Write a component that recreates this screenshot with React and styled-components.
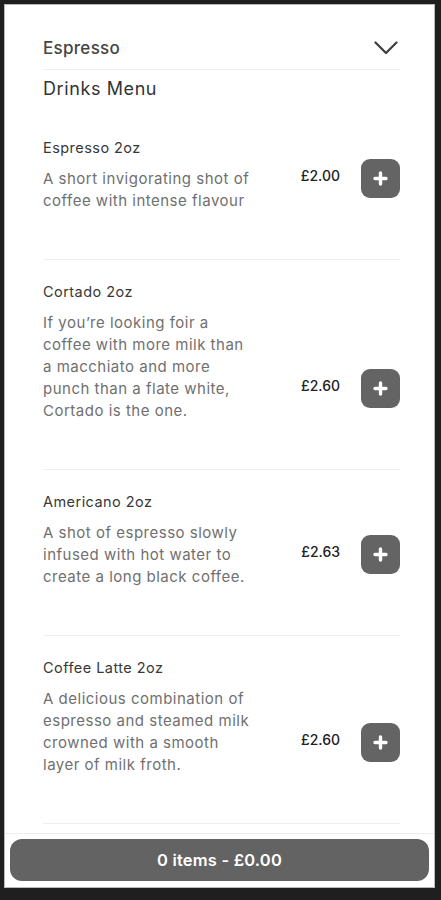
import styled, { createGlobalStyle } from "styled-components";

const Global = createGlobalStyle`
  html, body { margin: 0; padding: 0; background: #1f1f1f; }
  body { font-family: "Inter", "Open Sans", sans-serif; }
`;

const drinks = [
  {
    name: "Espresso 2oz",
    lines: ["A short invigorating shot of", "coffee with intense flavour"],
    price: "£2.00",
  },
  {
    name: "Cortado 2oz",
    lines: [
      "If you\u2019re looking foir a",
      "coffee with more milk than",
      "a macchiato and more",
      "punch than a flate white,",
      "Cortado is the one.",
    ],
    price: "£2.60",
  },
  {
    name: "Americano 2oz",
    lines: [
      "A shot of espresso slowly",
      "infused with hot water to",
      "create a long black coffee.",
    ],
    price: "£2.63",
  },
  {
    name: "Coffee Latte 2oz",
    lines: [
      "A delicious combination of",
      "espresso and steamed milk",
      "crowned with a smooth",
      "layer of milk froth.",
    ],
    price: "£2.60",
  },
];

export default function App() {
  return (
    <>
      <Global />
      <Frame>
        <Panel>
          <Scroll>
            <CategoryBar>
              <CategoryName>Espresso</CategoryName>
              <svg width="24" height="14" viewBox="0 0 24 14">
                <polyline
                  points="1.5,1.5 12,12 22.5,1.5"
                  fill="none"
                  stroke="#3d3d3d"
                  strokeWidth="2.2"
                  strokeLinecap="round"
                  strokeLinejoin="round"
                />
              </svg>
            </CategoryBar>
            <MenuTitle>Drinks Menu</MenuTitle>
            {drinks.map((d) => (
              <Item key={d.name}>
                <Info>
                  <ItemName>{d.name}</ItemName>
                  <Desc>
                    {d.lines.map((l) => (
                      <span key={l}>{l}</span>
                    ))}
                  </Desc>
                </Info>
                <Actions>
                  <Price>{d.price}</Price>
                  <AddButton aria-label="add">
                    <svg width="15" height="15" viewBox="0 0 15 15">
                      <path
                        d="M7.5 2v11M2 7.5h11"
                        stroke="#fff"
                        strokeWidth="3.4"
                        strokeLinecap="round"
                      />
                    </svg>
                  </AddButton>
                </Actions>
              </Item>
            ))}
          </Scroll>
          <Footer>
            <BasketButton>0 items - £0.00</BasketButton>
          </Footer>
        </Panel>
      </Frame>
    </>
  );
}

const Frame = styled.div`
  width: 441px;
  height: 900px;
  box-sizing: border-box;
  padding: 4px 6px 12px 4px;
  background: #1f1f1f;
`;

const Panel = styled.div`
  height: 100%;
  box-sizing: border-box;
  border: 1px solid #b9b9b9;
  background: #fff;
  display: flex;
  flex-direction: column;
  overflow: hidden;
`;

const Scroll = styled.div`
  flex: 1;
  min-height: 0;
  overflow: hidden;
  padding: 0 34px 0 38px;
`;

const CategoryBar = styled.div`
  display: flex;
  align-items: center;
  justify-content: space-between;
  padding: 31px 2px 9px 0;
  border-bottom: 1px solid #eeeeee;
`;

const CategoryName = styled.div`
  font-size: 17px;
  line-height: 24px;
  font-weight: 500;
  letter-spacing: 0.3px;
  color: #454545;
`;

const MenuTitle = styled.div`
  margin: 7px 0 15px;
  font-size: 18px;
  line-height: 24px;
  letter-spacing: 0.6px;
  color: #333;
`;

const Item = styled.div`
  display: flex;
  align-items: flex-end;
  justify-content: space-between;
  padding: 22px 0 47px;
  border-bottom: 1px solid #eeeeee;
`;

const Info = styled.div`
  display: flex;
  flex-direction: column;
  gap: 10px;
`;

const ItemName = styled.div`
  font-size: 14.5px;
  line-height: 20px;
  letter-spacing: 0.45px;
  color: #383838;
`;

const Desc = styled.div`
  display: flex;
  flex-direction: column;
  font-size: 15px;
  line-height: 22px;
  letter-spacing: 0.5px;
  color: #707070;
  white-space: nowrap;
`;

const Actions = styled.div`
  display: flex;
  align-items: center;
  gap: 21px;
  margin-bottom: 14px;
`;

const Price = styled.div`
  font-size: 14px;
  font-weight: 500;
  color: #222;
  margin-bottom: 6px;
`;

const AddButton = styled.button`
  width: 39px;
  height: 39px;
  border: none;
  border-radius: 9px;
  background: #646464;
  display: flex;
  align-items: center;
  justify-content: center;
  padding: 0;
  cursor: pointer;
`;

const Footer = styled.div`
  border-top: 1px solid #ececec;
  padding: 5px 5px 6px;
`;

const BasketButton = styled.button`
  width: 100%;
  height: 42px;
  border: none;
  border-radius: 12px;
  background: #646363;
  color: #fff;
  font-family: "Inter", sans-serif;
  font-size: 16.5px;
  font-weight: 600;
  letter-spacing: 0.2px;
  cursor: pointer;
`;
